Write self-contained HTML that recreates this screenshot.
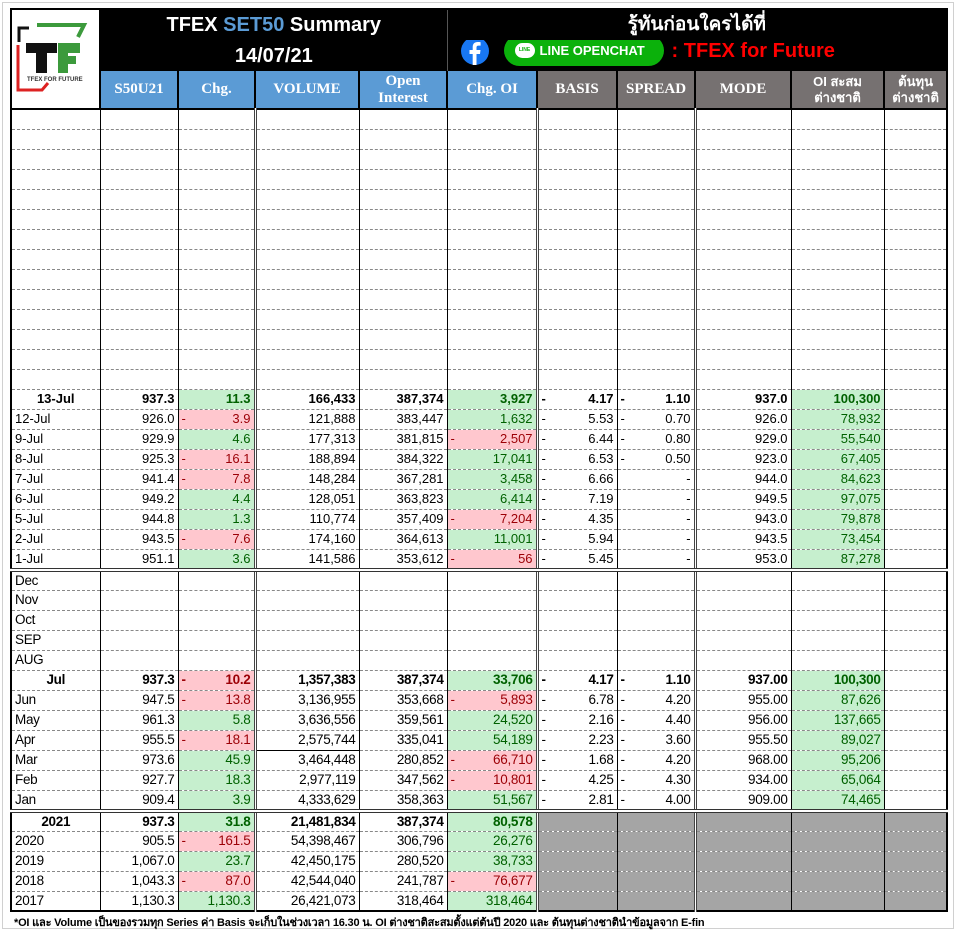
<!DOCTYPE html>
<html><head><meta charset="utf-8">
<style>
*{margin:0;padding:0;box-sizing:border-box}
body{width:956px;height:931px;background:#fff;position:relative;overflow:hidden;font-family:"Liberation Sans","Noto Sans CJK SC",sans-serif}
#frame{position:absolute;left:2px;top:2px;width:952px;height:927px;border:1px solid #d0d0d0}
table{position:absolute;left:10px;top:8px;width:936px;border-collapse:collapse;table-layout:fixed;border:2px solid #000}
td{height:20px;padding:0 3px;font-size:13px;text-align:right;white-space:nowrap;overflow:hidden;border-left:1.5px solid #000;border-bottom:1px dashed #888;line-height:18px;color:#000}
td.l{text-align:left}
td.c{text-align:center}
.d{border-left:3px double #444}
tr.b td{font-weight:bold}
.g{background:#c6efce;color:#006100}
.r{background:#ffc7ce;color:#9c0006}
tr.b .g{color:#006100}
i{font-style:normal;float:left;color:inherit}
.hd td{height:38px;font-family:"Liberation Serif",serif;font-weight:bold;color:#fff;text-align:center;font-size:15px;line-height:17px;border-bottom:2px solid #000;border-left:2px solid #000}
.bl{background:#5b9bd5}.gr{background:#767171}
.hd td.th{font-family:"Liberation Sans","Noto Sans CJK SC",sans-serif;font-weight:bold;font-size:13px;line-height:16px}
.top td{background:#000;color:#fff;border:none;height:31px;text-align:center;font-weight:bold;font-size:20px;padding:0}
.sec{border-top:4px double #333}
.n td{font-size:13.5px;letter-spacing:-0.3px}
.gy{background:#a5a5a5}
#foot{position:absolute;left:14px;top:913px;font-size:11px;font-weight:bold;font-family:"Liberation Sans","Noto Sans CJK SC",sans-serif;white-space:nowrap;letter-spacing:-0.2px}
</style></head><body>
<div id="frame"></div>
<table>
<colgroup><col style="width:89px"><col style="width:78px"><col style="width:77px"><col style="width:104px"><col style="width:88px"><col style="width:90px"><col style="width:80px"><col style="width:78px"><col style="width:96px"><col style="width:93px"><col style="width:63px"></colgroup>
<tr class="top"><td rowspan="3" style="background:#fff;border-right:2px solid #000;border-bottom:2px solid #000;position:relative">
<svg width="88" height="98" viewBox="0 0 88 98" style="position:absolute;left:0;top:0">
<path d="M7 32 V18 H17" stroke="#111" stroke-width="3" fill="none"/>
<path d="M25 15 H72 L66 27" stroke="#3c9a3c" stroke-width="4" fill="none"/>
<path d="M6 35 V80 H30 L36 73" stroke="#d22" stroke-width="3" fill="none"/>
<rect x="14" y="33" width="31" height="10" fill="#111"/><rect x="24" y="33" width="11" height="30" fill="#111"/>
<rect x="46" y="33" width="10" height="30" fill="#3c9a3c"/><rect x="46" y="33" width="22" height="10" fill="#3c9a3c"/><rect x="46" y="46" width="18" height="8" fill="#3c9a3c"/>
<text x="15" y="71" font-size="6" font-weight="bold" fill="#333" font-family="Liberation Sans">TFEX FOR FUTURE</text>
</svg></td>
<td colspan="4" style="border-right:1px solid #555">TFEX <span style="color:#5b9bd5">SET50</span> Summary</td>
<td colspan="6" style="font-family:'Liberation Sans','Noto Sans CJK SC',sans-serif;font-size:19px">รู้ทันก่อนใครได้ที่</td></tr>
<tr class="top"><td colspan="4" style="border-right:1px solid #555">14/07/21</td>
<td colspan="6" style="text-align:left;position:relative">
<svg width="30" height="30" viewBox="0 0 30 30" style="position:absolute;left:12px;top:-4px"><circle cx="15" cy="15" r="14" fill="#1877f2"/><path d="M16.5 29 V18 H20 L20.5 14 H16.5 V11.5 C16.5 10.3 17 9.6 18.5 9.6 H20.6 V6.2 C20 6.1 18.8 6 17.6 6 C14.6 6 12.7 7.8 12.7 11 V14 H9.5 V18 H12.7 V29 Z" fill="#fff"/></svg>
<div style="position:absolute;left:56px;top:-5px;width:160px;height:31px;border-radius:16px;background:#0bb10b;color:#fff;font-size:13px;line-height:31px;padding-left:36px;font-family:'Liberation Sans',sans-serif">LINE OPENCHAT
<div style="position:absolute;left:11px;top:8px;width:20px;height:15px;border-radius:8px;background:#fff;color:#0bb10b;font-size:5px;line-height:15px;text-align:center">LINE</div></div>
<span style="position:absolute;left:224px;top:-2px;color:#f00;font-size:20px;line-height:26px">: TFEX for Future</span></td></tr>
<tr class="hd"><td class="bl">S50U21</td><td class="bl">Chg.</td><td class="bl d">VOLUME</td><td class="bl">Open<br>Interest</td><td class="bl">Chg. OI</td><td class="gr d">BASIS</td><td class="gr">SPREAD</td><td class="gr d">MODE</td><td class="gr th">OI สะสม<br>ต่างชาติ</td><td class="gr th">ต้นทุน<br>ต่างชาติ</td></tr>
<tr><td></td><td></td><td></td><td class="d"></td><td></td><td></td><td class="d"></td><td></td><td class="d"></td><td></td><td></td></tr>
<tr><td></td><td></td><td></td><td class="d"></td><td></td><td></td><td class="d"></td><td></td><td class="d"></td><td></td><td></td></tr>
<tr><td></td><td></td><td></td><td class="d"></td><td></td><td></td><td class="d"></td><td></td><td class="d"></td><td></td><td></td></tr>
<tr><td></td><td></td><td></td><td class="d"></td><td></td><td></td><td class="d"></td><td></td><td class="d"></td><td></td><td></td></tr>
<tr><td></td><td></td><td></td><td class="d"></td><td></td><td></td><td class="d"></td><td></td><td class="d"></td><td></td><td></td></tr>
<tr><td></td><td></td><td></td><td class="d"></td><td></td><td></td><td class="d"></td><td></td><td class="d"></td><td></td><td></td></tr>
<tr><td></td><td></td><td></td><td class="d"></td><td></td><td></td><td class="d"></td><td></td><td class="d"></td><td></td><td></td></tr>
<tr><td></td><td></td><td></td><td class="d"></td><td></td><td></td><td class="d"></td><td></td><td class="d"></td><td></td><td></td></tr>
<tr><td></td><td></td><td></td><td class="d"></td><td></td><td></td><td class="d"></td><td></td><td class="d"></td><td></td><td></td></tr>
<tr><td></td><td></td><td></td><td class="d"></td><td></td><td></td><td class="d"></td><td></td><td class="d"></td><td></td><td></td></tr>
<tr><td></td><td></td><td></td><td class="d"></td><td></td><td></td><td class="d"></td><td></td><td class="d"></td><td></td><td></td></tr>
<tr><td></td><td></td><td></td><td class="d"></td><td></td><td></td><td class="d"></td><td></td><td class="d"></td><td></td><td></td></tr>
<tr><td></td><td></td><td></td><td class="d"></td><td></td><td></td><td class="d"></td><td></td><td class="d"></td><td></td><td></td></tr>
<tr><td></td><td></td><td></td><td class="d"></td><td></td><td></td><td class="d"></td><td></td><td class="d"></td><td></td><td></td></tr>
<tr class="b"><td class="c">13-Jul</td><td>937.3</td><td class="g">11.3</td><td class="d">166,433</td><td>387,374</td><td class="g">3,927</td><td class="d"><i>-</i>4.17</td><td><i>-</i>1.10</td><td class="d">937.0</td><td class="g">100,300</td><td></td></tr>
<tr><td class="l">12-Jul</td><td>926.0</td><td class="r"><i>-</i>3.9</td><td class="d">121,888</td><td>383,447</td><td class="g">1,632</td><td class="d"><i>-</i>5.53</td><td><i>-</i>0.70</td><td class="d">926.0</td><td class="g">78,932</td><td></td></tr>
<tr><td class="l">9-Jul</td><td>929.9</td><td class="g">4.6</td><td class="d">177,313</td><td>381,815</td><td class="r"><i>-</i>2,507</td><td class="d"><i>-</i>6.44</td><td><i>-</i>0.80</td><td class="d">929.0</td><td class="g">55,540</td><td></td></tr>
<tr><td class="l">8-Jul</td><td>925.3</td><td class="r"><i>-</i>16.1</td><td class="d">188,894</td><td>384,322</td><td class="g">17,041</td><td class="d"><i>-</i>6.53</td><td><i>-</i>0.50</td><td class="d">923.0</td><td class="g">67,405</td><td></td></tr>
<tr><td class="l">7-Jul</td><td>941.4</td><td class="r"><i>-</i>7.8</td><td class="d">148,284</td><td>367,281</td><td class="g">3,458</td><td class="d"><i>-</i>6.66</td><td>-</td><td class="d">944.0</td><td class="g">84,623</td><td></td></tr>
<tr><td class="l">6-Jul</td><td>949.2</td><td class="g">4.4</td><td class="d">128,051</td><td>363,823</td><td class="g">6,414</td><td class="d"><i>-</i>7.19</td><td>-</td><td class="d">949.5</td><td class="g">97,075</td><td></td></tr>
<tr><td class="l">5-Jul</td><td>944.8</td><td class="g">1.3</td><td class="d">110,774</td><td>357,409</td><td class="r"><i>-</i>7,204</td><td class="d"><i>-</i>4.35</td><td>-</td><td class="d">943.0</td><td class="g">79,878</td><td></td></tr>
<tr><td class="l">2-Jul</td><td>943.5</td><td class="r"><i>-</i>7.6</td><td class="d">174,160</td><td>364,613</td><td class="g">11,001</td><td class="d"><i>-</i>5.94</td><td>-</td><td class="d">943.5</td><td class="g">73,454</td><td></td></tr>
<tr><td class="l">1-Jul</td><td>951.1</td><td class="g">3.6</td><td class="d">141,586</td><td>353,612</td><td class="r"><i>-</i>56</td><td class="d"><i>-</i>5.45</td><td>-</td><td class="d">953.0</td><td class="g">87,278</td><td></td></tr>
<tbody class="n">
<tr class="sec"><td class="l sec">Dec</td><td class="sec"></td><td class="sec"></td><td class="d sec"></td><td class="sec"></td><td class="sec"></td><td class="d sec"></td><td class="sec"></td><td class="d sec"></td><td class="sec"></td><td class="sec"></td></tr>
<tr><td class="l">Nov</td><td></td><td></td><td class="d"></td><td></td><td></td><td class="d"></td><td></td><td class="d"></td><td></td><td></td></tr>
<tr><td class="l">Oct</td><td></td><td></td><td class="d"></td><td></td><td></td><td class="d"></td><td></td><td class="d"></td><td></td><td></td></tr>
<tr><td class="l">SEP</td><td></td><td></td><td class="d"></td><td></td><td></td><td class="d"></td><td></td><td class="d"></td><td></td><td></td></tr>
<tr><td class="l">AUG</td><td></td><td></td><td class="d"></td><td></td><td></td><td class="d"></td><td></td><td class="d"></td><td></td><td></td></tr>
<tr class="b"><td class="c">Jul</td><td>937.3</td><td class="r"><i>-</i>10.2</td><td class="d">1,357,383</td><td>387,374</td><td class="g">33,706</td><td class="d"><i>-</i>4.17</td><td><i>-</i>1.10</td><td class="d">937.00</td><td class="g">100,300</td><td></td></tr>
<tr><td class="l">Jun</td><td>947.5</td><td class="r"><i>-</i>13.8</td><td class="d">3,136,955</td><td>353,668</td><td class="r"><i>-</i>5,893</td><td class="d"><i>-</i>6.78</td><td><i>-</i>4.20</td><td class="d">955.00</td><td class="g">87,626</td><td></td></tr>
<tr><td class="l">May</td><td>961.3</td><td class="g">5.8</td><td class="d">3,636,556</td><td>359,561</td><td class="g">24,520</td><td class="d"><i>-</i>2.16</td><td><i>-</i>4.40</td><td class="d">956.00</td><td class="g">137,665</td><td></td></tr>
<tr><td class="l">Apr</td><td>955.5</td><td class="r"><i>-</i>18.1</td><td class="d" style="border-bottom:1px solid #000">2,575,744</td><td>335,041</td><td class="g">54,189</td><td class="d"><i>-</i>2.23</td><td><i>-</i>3.60</td><td class="d">955.50</td><td class="g">89,027</td><td></td></tr>
<tr><td class="l">Mar</td><td>973.6</td><td class="g">45.9</td><td class="d">3,464,448</td><td>280,852</td><td class="r"><i>-</i>66,710</td><td class="d"><i>-</i>1.68</td><td><i>-</i>4.20</td><td class="d">968.00</td><td class="g">95,206</td><td></td></tr>
<tr><td class="l">Feb</td><td>927.7</td><td class="g">18.3</td><td class="d">2,977,119</td><td>347,562</td><td class="r"><i>-</i>10,801</td><td class="d"><i>-</i>4.25</td><td><i>-</i>4.30</td><td class="d">934.00</td><td class="g">65,064</td><td></td></tr>
<tr><td class="l">Jan</td><td>909.4</td><td class="g">3.9</td><td class="d">4,333,629</td><td>358,363</td><td class="g">51,567</td><td class="d"><i>-</i>2.81</td><td><i>-</i>4.00</td><td class="d">909.00</td><td class="g">74,465</td><td></td></tr>
<tr class="b"><td class="c sec">2021</td><td class="sec">937.3</td><td class="g sec">31.8</td><td class="d sec">21,481,834</td><td class="sec">387,374</td><td class="g sec">80,578</td><td class="d sec gy"></td><td class="sec gy"></td><td class="d sec gy"></td><td class="sec gy"></td><td class="sec gy"></td></tr>
<tr><td class="l">2020</td><td>905.5</td><td class="r"><i>-</i>161.5</td><td class="d">54,398,467</td><td>306,796</td><td class="g">26,276</td><td class="d gy"></td><td class="gy"></td><td class="d gy"></td><td class="gy"></td><td class="gy"></td></tr>
<tr><td class="l">2019</td><td>1,067.0</td><td class="g">23.7</td><td class="d">42,450,175</td><td>280,520</td><td class="g">38,733</td><td class="d gy"></td><td class="gy"></td><td class="d gy"></td><td class="gy"></td><td class="gy"></td></tr>
<tr><td class="l">2018</td><td>1,043.3</td><td class="r"><i>-</i>87.0</td><td class="d">42,544,040</td><td>241,787</td><td class="r"><i>-</i>76,677</td><td class="d gy"></td><td class="gy"></td><td class="d gy"></td><td class="gy"></td><td class="gy"></td></tr>
<tr><td class="l">2017</td><td>1,130.3</td><td class="g">1,130.3</td><td class="d">26,421,073</td><td>318,464</td><td class="g">318,464</td><td class="d gy"></td><td class="gy"></td><td class="d gy"></td><td class="gy"></td><td class="gy"></td></tr>
</tbody>
</table>
<div id="foot">*OI และ Volume เป็นของรวมทุก Series ค่า Basis จะเก็บในช่วงเวลา 16.30 น. OI ต่างชาติสะสมตั้งแต่ต้นปี 2020 และ ต้นทุนต่างชาตินำข้อมูลจาก E-fin</div>
</body></html>
